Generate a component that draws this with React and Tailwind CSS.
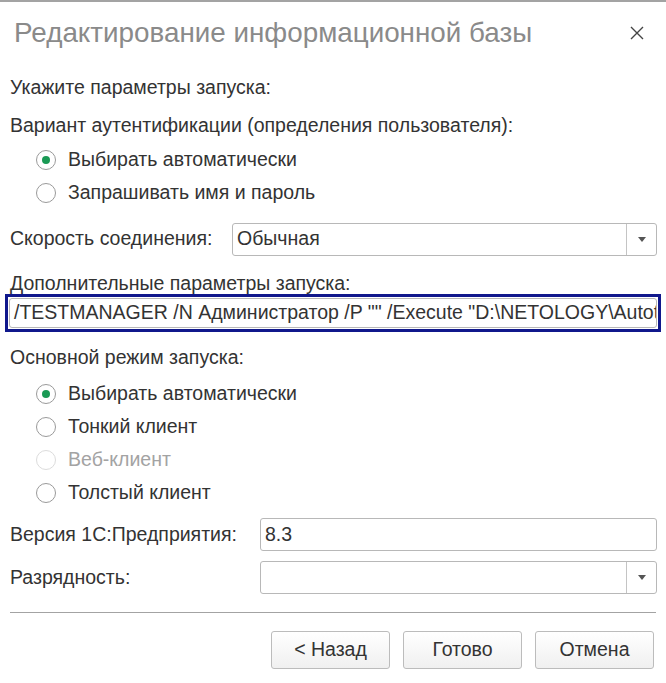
import { useState } from 'react';

function Radio({ label, checked, disabled }) {
  return (
    <div className="h-[33px] flex items-center pl-[26px]">
      <span
        className={`w-[20px] h-[20px] rounded-full border flex items-center justify-center bg-white ${
          disabled ? 'border-[#dcdcdc]' : 'border-[#9a9a9a]'
        }`}
      >
        {checked && <span className="w-[8px] h-[8px] rounded-full bg-[#1a9a55]" />}
      </span>
      <span className={`ml-[12px] ${disabled ? 'text-[#a3a3a3]' : 'text-[#333]'}`}>{label}</span>
    </div>
  );
}

function Select({ value, className }) {
  return (
    <div className={`h-[33px] flex border border-[#b8b8b8] rounded-[3px] bg-white ${className}`}>
      <div className="flex-1 flex items-center pl-[4px] text-[#333]">{value}</div>
      <div className="w-[30px] border-l border-[#c4c4c4] flex items-center justify-center">
        <svg width="8" height="5" viewBox="0 0 8 5">
          <path d="M0 0h8L4 5z" fill="#555" />
        </svg>
      </div>
    </div>
  );
}

function Button({ children }) {
  return (
    <button className="w-[119px] h-[38px] border border-[#bcbcbc] rounded-[3px] bg-gradient-to-b from-white to-[#f0f0f0] text-[#333]">
      {children}
    </button>
  );
}

export default function App() {
  const [params] = useState('/TESTMANAGER /N Администратор /P "" /Execute "D:\\NETOLOGY\\Autotests"');

  return (
    <div className="w-[666px] h-[683px] bg-white border-t-2 border-[#a3a3a3] font-['Liberation_Sans',Arial,sans-serif] text-[19.5px] text-[#333] overflow-hidden">
      {/* Header */}
      <div className="h-[62px] flex items-center justify-between pl-[14px] pr-[21px]">
        <h1 className="text-[27.8px] text-[#8a8a8a]">Редактирование информационной базы</h1>
        <svg width="16" height="16" viewBox="0 0 16 16">
          <path d="M2 2l12 12M14 2L2 14" stroke="#444" strokeWidth="1.4" />
        </svg>
      </div>

      <div className="px-[10px] flex flex-col">
        <div className="h-[32px] mt-[8px] flex items-center">Укажите параметры запуска:</div>
        <div className="h-[32px] mt-[6px] flex items-center">Вариант аутентификации (определения пользователя):</div>
        <div className="mt-[1px]">
          <Radio label="Выбирать автоматически" checked />
          <Radio label="Запрашивать имя и пароль" />
        </div>

        <div className="h-[32px] mt-[14px] flex items-center">
          <span className="w-[222px]">Скорость соединения:</span>
          <Select value="Обычная" className="flex-1 mr-[-1px]" />
        </div>

        <div className="h-[20px] mt-[19px] flex items-center">Дополнительные параметры запуска:</div>
        <div className="h-[38px] mx-[-5px] w-[656px] border-[3px] border-[#10188c] p-[1px]">
          <div className="h-full border border-[#b8b8b8] rounded-[3px] flex items-center pl-[4px] overflow-hidden whitespace-nowrap">
            {params}
          </div>
        </div>

        <div className="h-[32px] mt-[10px] flex items-center">Основной режим запуска:</div>
        <div className="mt-[3px]">
          <Radio label="Выбирать автоматически" checked />
          <Radio label="Тонкий клиент" />
          <Radio label="Веб-клиент" disabled />
          <Radio label="Толстый клиент" />
        </div>

        <div className="h-[33px] mt-[9px] flex items-center">
          <span className="w-[250px]">Версия 1С:Предприятия:</span>
          <div className="flex-1 h-[33px] border border-[#b8b8b8] rounded-[3px] flex items-center pl-[4px] mr-[-1px]">8.3</div>
        </div>
        <div className="h-[33px] mt-[10px] flex items-center">
          <span className="w-[250px]">Разрядность:</span>
          <Select value="" className="flex-1 mr-[-1px]" />
        </div>

        <div className="h-px bg-[#a3a3a3] mt-[18px] w-[646px]" />

        <div className="mt-[18px] flex justify-end gap-[13px] pr-[2px]">
          <Button>&lt; Назад</Button>
          <Button>Готово</Button>
          <Button>Отмена</Button>
        </div>
      </div>
    </div>
  );
}
